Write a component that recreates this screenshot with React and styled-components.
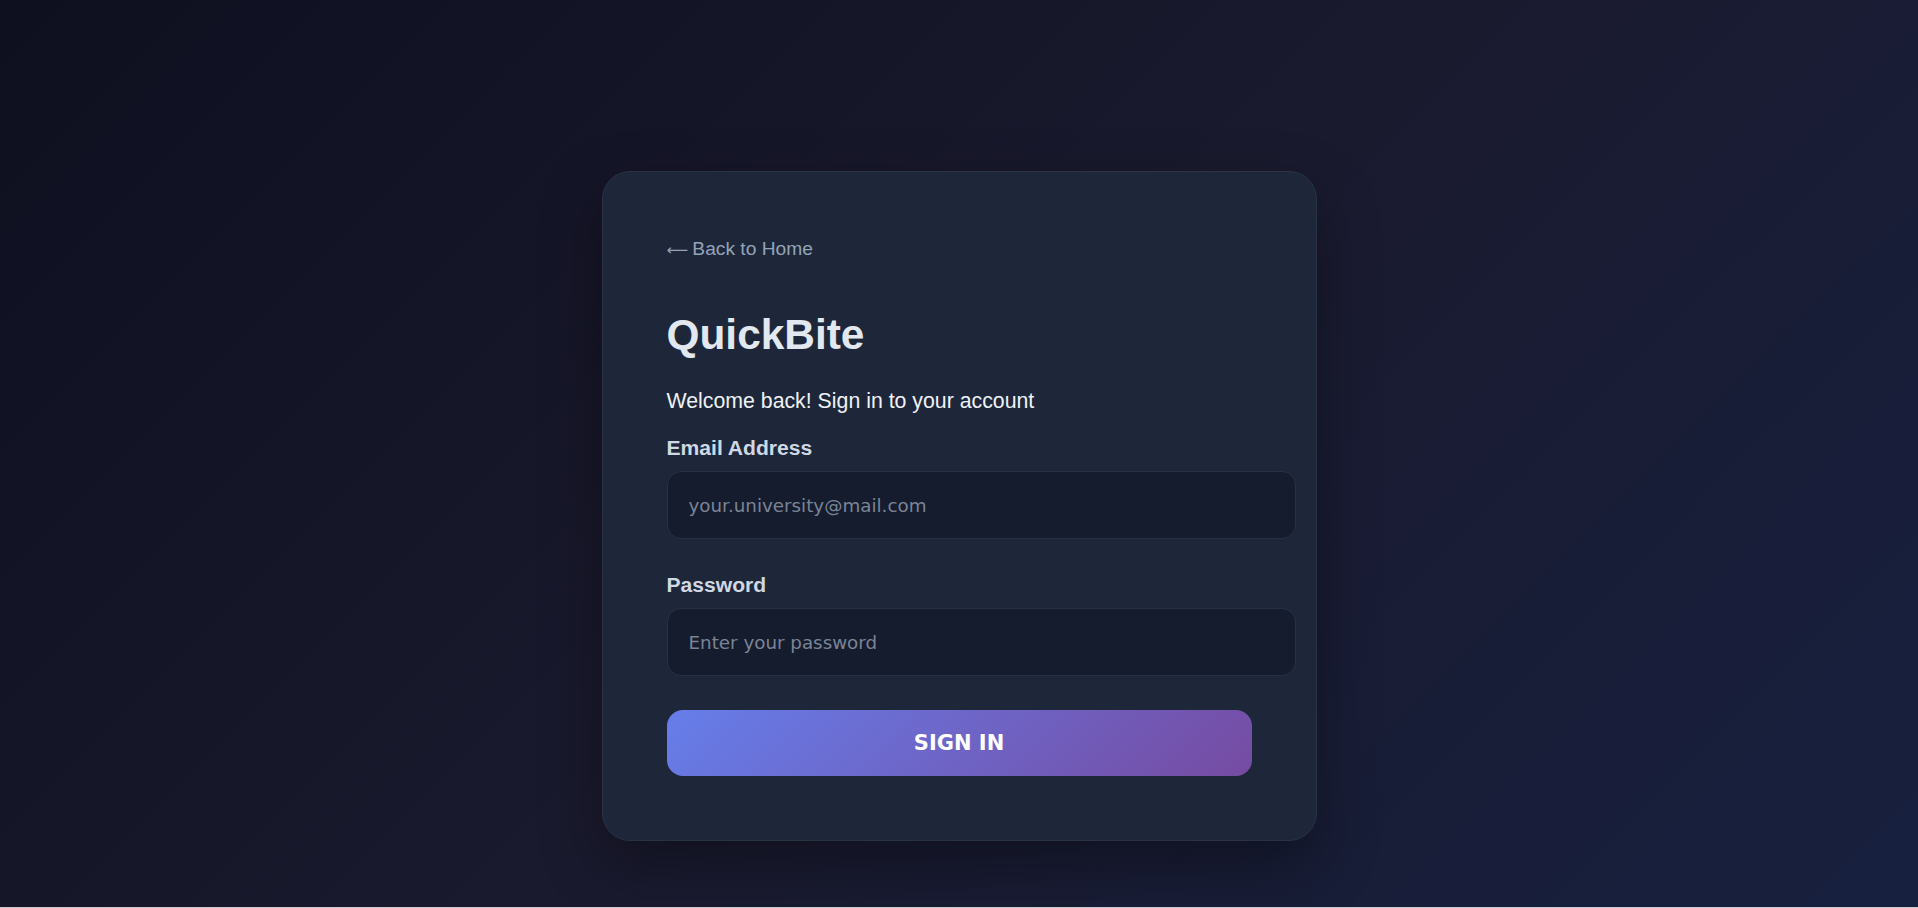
import React, { useState } from 'react';
import styled, { createGlobalStyle } from 'styled-components';

const GlobalStyle = createGlobalStyle`
  * {
    box-sizing: border-box;
  }
  html, body {
    margin: 0;
    padding: 0;
    background: #c9cbd0;
    font-family: 'Liberation Sans', Arial, sans-serif;
  }
`;

export default function App() {
  const [email, setEmail] = useState('');
  const [password, setPassword] = useState('');

  return (
    <>
      <GlobalStyle />
      <Page>
        <Card>
          <BackLink href="#">
            <Arrow>⟵</Arrow> Back to Home
          </BackLink>
          <Title>QuickBite</Title>
          <Subtitle>Welcome back! Sign in to your account</Subtitle>
          <Form onSubmit={(e) => e.preventDefault()}>
            <Field>
              <Label htmlFor="email">Email Address</Label>
              <Input
                id="email"
                type="email"
                placeholder="your.university@mail.com"
                value={email}
                onChange={({ target: { value } }) => setEmail(value)}
              />
            </Field>
            <Field>
              <Label htmlFor="password">Password</Label>
              <Input
                id="password"
                type="password"
                placeholder="Enter your password"
                value={password}
                onChange={({ target: { value } }) => setPassword(value)}
              />
            </Field>
            <SubmitButton type="submit">SIGN IN</SubmitButton>
          </Form>
        </Card>
      </Page>
    </>
  );
}

const Page = styled.div`
  height: calc(100vh - 1px);
  display: flex;
  justify-content: center;
  align-items: flex-start;
  padding-top: 171px;
  background: linear-gradient(135deg, #0e0f1f 0%, #1a1a2e 50%, #17203f 100%);
  overflow: hidden;
`;

const Card = styled.div`
  width: 715px;
  padding: 64px;
  display: flex;
  flex-direction: column;
  background: #1e2739;
  border: 1px solid #2a3346;
  border-radius: 28px;
  box-shadow: 0 24px 60px rgba(0, 0, 0, 0.35);
`;

const BackLink = styled.a`
  align-self: flex-start;
  display: block;
  height: 22px;
  margin-top: 2px;
  font-size: 19.2px;
  line-height: 22px;
  color: #94a3b8;
  text-decoration: none;
`;

const Arrow = styled.span`
  font-family: 'DejaVu Sans', sans-serif;
  font-size: 15px;
  line-height: 0;
  letter-spacing: -1px;
`;

const Title = styled.h1`
  margin: 51px 0 0;
  font-size: 42.4px;
  line-height: 48px;
  font-weight: 700;
  color: #e2e8f0;
`;

const Subtitle = styled.p`
  margin: 30px 0 0;
  font-size: 21.3px;
  line-height: 24px;
  color: #eef2f7;
`;

const Form = styled.form`
  margin-top: 23px;
  display: flex;
  flex-direction: column;
`;

const Field = styled.div`
  display: flex;
  flex-direction: column;
  gap: 11px;
  margin-bottom: 34px;
`;

const Label = styled.label`
  font-size: 21.1px;
  line-height: 24px;
  font-weight: 700;
  color: #cfd8e4;
`;

const Input = styled.input`
  box-sizing: content-box;
  width: 100%;
  height: 66px;
  padding: 0 21px;
  background: #151c2e;
  border: 1px solid #273145;
  border-radius: 14px;
  outline: none;
  color: #e2e8f0;
  font-family: 'DejaVu Sans', Verdana, sans-serif;
  font-size: 18.3px;
  &::placeholder {
    color: #7b8496;
  }
`;

const SubmitButton = styled.button`
  width: 100%;
  height: 66px;
  border: none;
  border-radius: 16px;
  background: linear-gradient(135deg, #667eea 0%, #764ba2 100%);
  color: #ffffff;
  font-family: 'DejaVu Sans', Verdana, sans-serif;
  font-size: 21px;
  font-weight: 700;
  cursor: pointer;
`;
